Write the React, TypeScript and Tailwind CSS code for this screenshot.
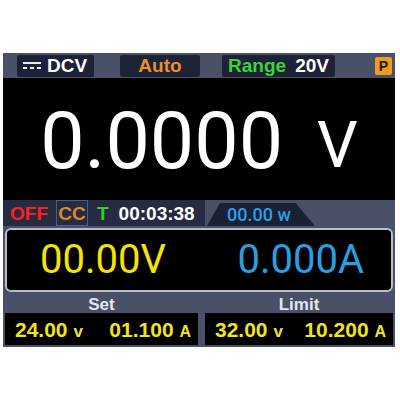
import React from "react";

export default function App() {
  const sans = { fontFamily: '"Liberation Sans", Arial, sans-serif' };
  const digit = { fontFamily: 'Roboto, "Noto Sans", sans-serif' };
  return (
    <div className="w-[400px] h-[400px] bg-white overflow-hidden" style={sans}>
      <div className="ml-[3px] mt-[53px] w-[392px] h-[294px] bg-[#4a5068] flex flex-col">
        {/* Top bar */}
        <div className="h-[25px] flex items-center pl-[14px] pr-[3px] font-bold text-[19px] leading-none">
          <div className="w-[77px] h-[22px] bg-[#1e2236] rounded-[2px] flex items-center pl-[6px] gap-[6px] text-white">
            <svg width="18" height="10" viewBox="0 0 18 10">
              <rect x="0" y="1" width="18" height="2" fill="#e8eaf0" />
              <rect x="0" y="6" width="4" height="2" fill="#e8eaf0" />
              <rect x="7" y="6" width="4" height="2" fill="#e8eaf0" />
              <rect x="14" y="6" width="4" height="2" fill="#e8eaf0" />
            </svg>
            <span>DCV</span>
          </div>
          <div className="ml-[26px] w-[80px] h-[22px] bg-[#1e2236] rounded-[2px] flex items-center justify-center text-[#e8902a]">
            Auto
          </div>
          <div className="ml-[22px] w-[113px] h-[22px] bg-[#1e2236] rounded-[2px] flex items-center justify-center gap-[9px]">
            <span className="text-[#3ad43a]">Range</span>
            <span className="text-white">20V</span>
          </div>
          <div className="flex-1" />
          <div className="w-[17px] h-[18px] bg-[#f09a20] rounded-[2px] flex items-center justify-center text-[#1a1a1a] text-[14px]">
            P
          </div>
        </div>

        {/* Main display */}
        <div className="h-[122px] bg-black flex items-end justify-center pb-[28px] text-white" style={digit}>
          <span className="text-[79px] leading-[62px]">0.0000</span>
          <span className="ml-[34px] text-[64px] leading-[52px]">V</span>
        </div>

        {/* Status bar */}
        <div className="h-[26px] flex items-stretch font-bold text-[19px] leading-none">
          <div className="w-[202px] bg-[#262b42] flex items-center">
            <span className="ml-[7px] text-[#ff1f1f]">OFF</span>
            <div className="ml-[8px] h-full w-[32px] border border-[#44608a] flex items-center justify-center text-[#d98a2a]">
              CC
            </div>
            <span className="ml-[9px] text-[#2ed02e]">T</span>
            <span className="ml-[10px] text-white">00:03:38</span>
          </div>
          <div
            className="ml-[2px] mt-[3px] w-[108px] bg-[#1b2035] flex items-center justify-center pr-[4px] text-[#2aa0ea] text-[18px]"
            style={{ clipPath: "polygon(12% 0, 82% 0, 100% 100%, 0 100%)", fontFamily: 'Roboto, sans-serif', fontWeight: 500 }}
          >
            00.00 w
          </div>
          <div className="flex-1" />
        </div>

        {/* Measurement box */}
        <div className="mt-[2px] mx-[2px] h-[64px] bg-black border-2 border-[#b8bcc8] rounded-[6px] flex items-center" style={digit}>
          <span className="ml-[33px] text-[40px] leading-none text-[#f5e400]">00.00V</span>
          <div className="flex-1" />
          <span className="mr-[27px] text-[40px] leading-none text-[#2a9fe0]">0.000A</span>
        </div>

        {/* Bottom panels */}
        <div className="mt-[1px] h-[54px] flex gap-[3px]">
          {[
            { title: "Set", v: "24.00", a: "01.100" },
            { title: "Limit", v: "32.00", a: "10.200" },
          ].map((p, i) => (
            <div key={i} className={(i === 0 ? "w-[197px]" : "flex-1") + " flex flex-col px-[2px] pb-[2px]"}>
              <div className="h-[20px] flex items-center justify-center pt-[3px] text-[#e2e6f2] font-bold text-[17px] leading-none">
                {p.title}
              </div>
              <div className="flex-1 bg-black flex items-center justify-between pl-[10px] pr-[7px] text-[#f2e41a] font-bold text-[21px] leading-none">
                <span>
                  {p.v} <span className="text-[17px]">v</span>
                </span>
                <span>
                  {p.a} <span className="text-[16px]">A</span>
                </span>
              </div>
            </div>
          ))}
        </div>
      </div>
    </div>
  );
}
